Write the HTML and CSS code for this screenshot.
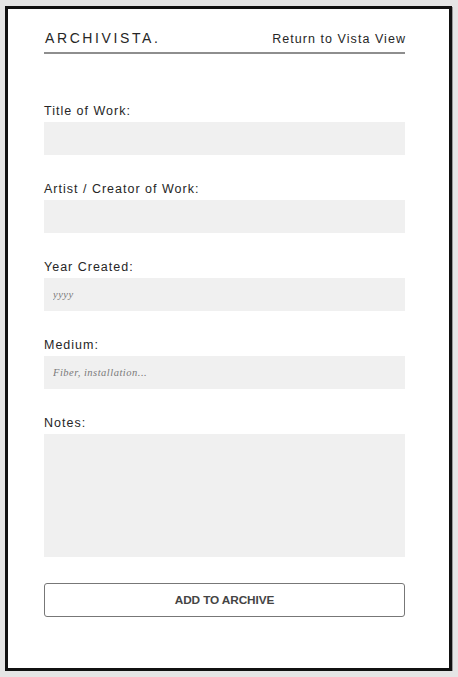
FILE: index.html
```html
<!DOCTYPE html>
<html lang="en">
<head>
<meta charset="utf-8">
<title>Archivista</title>
<link rel="stylesheet" href="styles.css">
</head>
<body>
<div class="card">
  <header class="header">
    <div class="logo">ARCHIVISTA.</div>
    <a class="back" href="#">Return to Vista View</a>
  </header>
  <form class="form">
    <div class="group">
      <label class="label" for="title">Title of Work:</label>
      <input class="field" id="title" type="text">
    </div>
    <div class="group">
      <label class="label" for="artist">Artist / Creator of Work:</label>
      <input class="field" id="artist" type="text">
    </div>
    <div class="group">
      <label class="label" for="year">Year Created:</label>
      <input class="field" id="year" type="text" placeholder="yyyy">
    </div>
    <div class="group">
      <label class="label" for="medium">Medium:</label>
      <input class="field" id="medium" type="text" placeholder="Fiber, installation...">
    </div>
    <div class="group group-last">
      <label class="label" for="notes">Notes:</label>
      <textarea class="field notes" id="notes"></textarea>
    </div>
    <button class="submit" type="button">ADD TO ARCHIVE</button>
  </form>
</div>
</body>
</html>
```
FILE: styles.css
```css
html, body {
  margin: 0;
  padding: 0;
  background: #e5e5e5;
}
body {
  padding: 6px 0 0 5px;
  font-family: "Liberation Sans", Arial, sans-serif;
  color: #222;
}
.card {
  width: 447px;
  background: #fff;
  border: 3px solid #111;
  box-shadow: 1px 1px 0 #9a9a9a;
  padding: 21px 44px 51px 36px;
  box-sizing: border-box;
}
.header {
  display: flex;
  justify-content: space-between;
  align-items: baseline;
  padding-bottom: 4px;
  border-bottom: 2px solid #8e8e8e;
  line-height: 17px;
}
.logo {
  font-size: 14px;
  letter-spacing: 2.6px;
  color: #262626;
  padding-left: 1px;
}
.back {
  font-size: 12.5px;
  letter-spacing: 1.05px;
  color: #262626;
  text-decoration: none;
  margin-right: -1px;
}
.form {
  padding-top: 50px;
  display: flex;
  flex-direction: column;
}
.group {
  display: flex;
  flex-direction: column;
  margin-bottom: 27px;
}
.group-last {
  margin-bottom: 26px;
}
.label {
  font-size: 12.5px;
  letter-spacing: 1px;
  line-height: 15px;
  margin-bottom: 3px;
  color: #262626;
}
.field {
  display: block;
  height: 33px;
  border: none;
  background: #f0f0f0;
  padding: 0 9px;
  box-sizing: border-box;
  width: 100%;
  font-family: "Liberation Serif", "Times New Roman", serif;
  font-style: italic;
  font-size: 10.5px;
  letter-spacing: 0.5px;
  color: #333;
  outline: none;
}
.field::placeholder {
  color: #7a7a7a;
}
.notes {
  height: 123px;
  resize: none;
  padding: 9px;
}
.submit {
  height: 34px;
  width: 100%;
  background: #fff;
  border: 1px solid #777;
  border-radius: 3px;
  font-family: "Liberation Sans", Arial, sans-serif;
  font-weight: bold;
  font-size: 11.8px;
  color: #444;
  letter-spacing: -0.1px;
  cursor: pointer;
}
```
